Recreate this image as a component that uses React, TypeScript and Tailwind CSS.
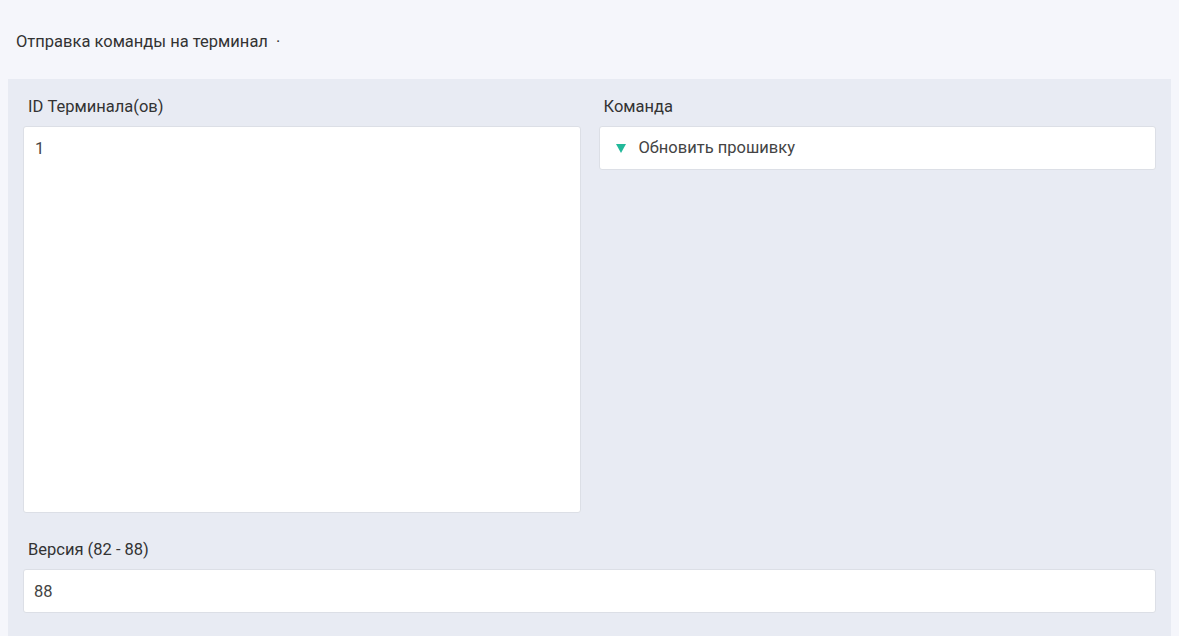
export default function App() {
  return (
    <div className="min-h-[636px] bg-[#f5f6fb] font-['Roboto',sans-serif] text-[16.5px] text-[#333]">
      <div className="px-4 pb-[26px] pt-[31px]">
        <h1 className="text-[16.5px] leading-[22px] font-normal">
          Отправка команды на терминал <span className="ml-1">·</span>
        </h1>
      </div>
      <div className="mx-2 bg-[#e8ebf3] px-[15px] pt-[17px] pb-6">
        <div className="grid grid-cols-2 gap-[18px]">
          <div>
            <label className="block px-[5px] leading-[22px]">ID Терминала(ов)</label>
            <textarea
              defaultValue="1"
              className="mt-[8px] block h-[387px] w-full resize-none rounded-[3px] border border-[#dcdfe6] bg-white px-[11px] py-[11px] text-[16.5px] leading-[22px] text-[#444] outline-none"
            />
          </div>
          <div>
            <label className="block px-[5px] leading-[22px]">Команда</label>
            <div className="mt-[8px] flex h-[44px] items-center gap-[13px] rounded-[3px] border border-[#dcdfe6] bg-white px-[16px] text-[#444]">
              <svg width="10" height="9" viewBox="0 0 10 9">
                <path d="M0 0 H10 L5 9 Z" fill="#22b99a" />
              </svg>
              <span>Обновить прошивку</span>
            </div>
          </div>
        </div>
        <div className="mt-[26px]">
          <label className="block px-[5px] leading-[22px]">Версия (82 - 88)</label>
          <input
            defaultValue="88"
            className="mt-[8px] block h-[44px] w-full rounded-[3px] border border-[#dcdfe6] bg-white px-[10px] text-[16.5px] text-[#444] outline-none"
          />
        </div>
      </div>
    </div>
  );
}
